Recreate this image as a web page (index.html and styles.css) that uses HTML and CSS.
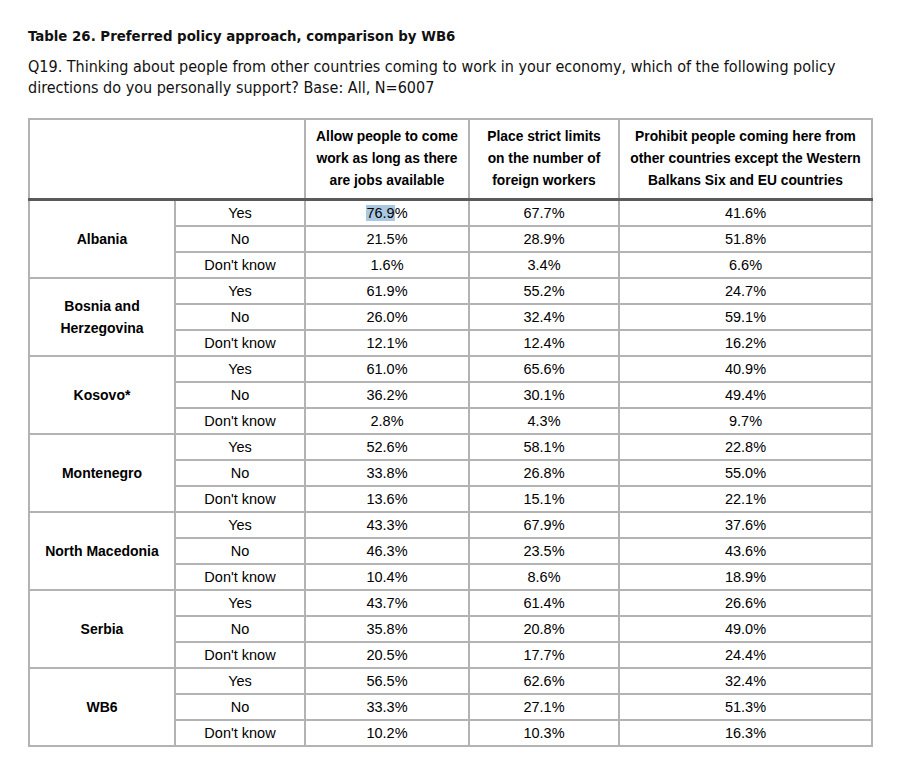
FILE: index.html
```html
<!DOCTYPE html>
<html lang="en">
<head>
<meta charset="utf-8">
<title>Table 26</title>
<link rel="stylesheet" href="styles.css">
</head>
<body>
<div class="page">
  <h1 class="title">Table 26. Preferred policy approach, comparison by WB6</h1>
  <p class="question">Q19. Thinking about people from other countries coming to work in your economy, which of the following policy directions do you personally support? Base: All, N=6007</p>
  <table class="data">
    <colgroup>
      <col class="c-country">
      <col class="c-answer">
      <col class="c-allow">
      <col class="c-limit">
      <col class="c-prohibit">
    </colgroup>
    <thead>
      <tr>
        <th colspan="2"></th>
        <th>Allow people to come<br>work as long as there<br>are jobs available</th>
        <th>Place strict limits<br>on the number of<br>foreign workers</th>
        <th>Prohibit people coming here from<br>other countries except the Western<br>Balkans Six and EU countries</th>
      </tr>
    </thead>
    <tbody>
      <tr><th rowspan="3" class="country">Albania</th><td>Yes</td><td><span class="sel">76.9</span>%</td><td>67.7%</td><td>41.6%</td></tr>
      <tr><td>No</td><td>21.5%</td><td>28.9%</td><td>51.8%</td></tr>
      <tr><td>Don't know</td><td>1.6%</td><td>3.4%</td><td>6.6%</td></tr>

      <tr><th rowspan="3" class="country">Bosnia and<br>Herzegovina</th><td>Yes</td><td>61.9%</td><td>55.2%</td><td>24.7%</td></tr>
      <tr><td>No</td><td>26.0%</td><td>32.4%</td><td>59.1%</td></tr>
      <tr><td>Don't know</td><td>12.1%</td><td>12.4%</td><td>16.2%</td></tr>

      <tr><th rowspan="3" class="country">Kosovo*</th><td>Yes</td><td>61.0%</td><td>65.6%</td><td>40.9%</td></tr>
      <tr><td>No</td><td>36.2%</td><td>30.1%</td><td>49.4%</td></tr>
      <tr><td>Don't know</td><td>2.8%</td><td>4.3%</td><td>9.7%</td></tr>

      <tr><th rowspan="3" class="country">Montenegro</th><td>Yes</td><td>52.6%</td><td>58.1%</td><td>22.8%</td></tr>
      <tr><td>No</td><td>33.8%</td><td>26.8%</td><td>55.0%</td></tr>
      <tr><td>Don't know</td><td>13.6%</td><td>15.1%</td><td>22.1%</td></tr>

      <tr><th rowspan="3" class="country">North Macedonia</th><td>Yes</td><td>43.3%</td><td>67.9%</td><td>37.6%</td></tr>
      <tr><td>No</td><td>46.3%</td><td>23.5%</td><td>43.6%</td></tr>
      <tr><td>Don't know</td><td>10.4%</td><td>8.6%</td><td>18.9%</td></tr>

      <tr><th rowspan="3" class="country">Serbia</th><td>Yes</td><td>43.7%</td><td>61.4%</td><td>26.6%</td></tr>
      <tr><td>No</td><td>35.8%</td><td>20.8%</td><td>49.0%</td></tr>
      <tr><td>Don't know</td><td>20.5%</td><td>17.7%</td><td>24.4%</td></tr>

      <tr><th rowspan="3" class="country">WB6</th><td>Yes</td><td>56.5%</td><td>62.6%</td><td>32.4%</td></tr>
      <tr><td>No</td><td>33.3%</td><td>27.1%</td><td>51.3%</td></tr>
      <tr><td>Don't know</td><td>10.2%</td><td>10.3%</td><td>16.3%</td></tr>
    </tbody>
  </table>
</div>
</body>
</html>
```
FILE: styles.css
```css
html, body {
  margin: 0;
  padding: 0;
  background: #ffffff;
}

.page {
  padding: 26px 0 0 28px;
  color: #111111;
}

.title {
  margin: 0;
  font-family: "DejaVu Sans Condensed", "DejaVu Sans", sans-serif;
  font-weight: bold;
  font-size: 14.85px;
  line-height: 20px;
}

.question {
  margin: 10px 0 0 0;
  font-family: "DejaVu Sans Condensed", "DejaVu Sans", sans-serif;
  font-size: 16px;
  line-height: 21px;
  width: 840px;
}

.data {
  margin-top: 20px;
  border-collapse: collapse;
  table-layout: fixed;
  width: 843px;
  font-family: "Liberation Sans", Arial, sans-serif;
  color: #000000;
}

.c-country { width: 146px; }
.c-answer { width: 130px; }
.c-allow { width: 164px; }
.c-limit { width: 150px; }
.c-prohibit { width: 253px; }

.data th,
.data td {
  border: 2px solid #b3b3b3;
  text-align: center;
  vertical-align: middle;
  padding: 0;
}

.data thead th {
  font-size: 13.8px;
  font-weight: bold;
  line-height: 21.7px;
  height: 78px;
  border-bottom: 3px solid #5a5a5a;
}

.data td {
  font-size: 14.5px;
  height: 24px;
  line-height: 20px;
}

.data .country {
  font-size: 14px;
  font-weight: bold;
  line-height: 22px;
}

.sel {
  background: #a9c8e2;
}
```
